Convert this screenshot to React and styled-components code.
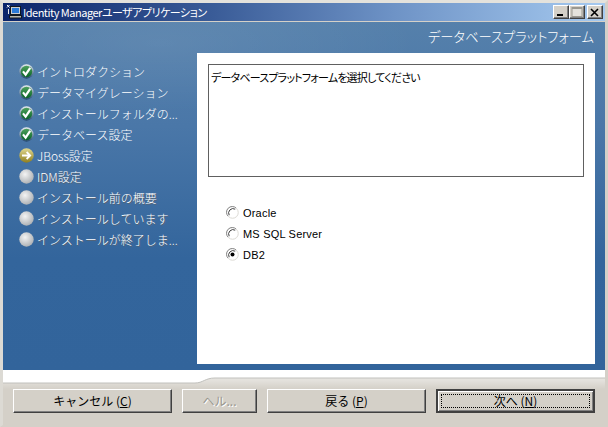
import React from 'react';
import styled, { createGlobalStyle } from 'styled-components';

const steps = [
  { label: 'イントロダクション', state: 'done' },
  { label: 'データマイグレーション', state: 'done' },
  { label: 'インストールフォルダの...', state: 'done' },
  { label: 'データベース設定', state: 'done' },
  { label: 'JBoss設定', state: 'current' },
  { label: 'IDM設定', state: 'todo' },
  { label: 'インストール前の概要', state: 'todo' },
  { label: 'インストールしています', state: 'todo' },
  { label: 'インストールが終了しま...', state: 'todo' },
];

const platforms = [
  { name: 'Oracle', checked: false },
  { name: 'MS SQL Server', checked: false },
  { name: 'DB2', checked: true },
];

const GlobalStyle = createGlobalStyle`
  html, body {
    margin: 0;
    padding: 0;
    background: #d4d0c8;
  }
  body {
    font-family: "Noto Sans CJK JP", "Liberation Sans", sans-serif;
    font-size: 12px;
  }
`;

const Frame = styled.div`
  box-sizing: border-box;
  width: 608px;
  height: 427px;
  display: flex;
  flex-direction: column;
  overflow: hidden;
  background: #d4d0c8;
  border-top: 3px solid #e4e2dc;
  border-left: 3px solid #dcdad4;
  border-right: 3px solid #d4d0c8;
  border-bottom: 2px solid #d4d0c8;
  position: relative;

  &::after {
    content: '';
    position: absolute;
    left: -3px;
    right: -3px;
    bottom: -2px;
    height: 1px;
    background: #404040;
  }
`;

const TitleBar = styled.div`
  flex: none;
  height: 18px;
  display: flex;
  align-items: center;
  padding: 0 2px 0 3px;
  background: linear-gradient(90deg, #0a246a 0%, #3a5c98 35%, #6e93c6 65%, #a6caf0 100%);
  border-bottom: 1px solid #d4d0c8;
  color: #fff;
`;

const TitleText = styled.span`
  flex: 1;
  margin-left: 1px;
  font-size: 11px;
  letter-spacing: -0.5px;
  font-feature-settings: "palt";
  line-height: 18px;
  white-space: nowrap;
`;

const WinButton = styled.div`
  box-sizing: border-box;
  width: 16px;
  height: 14px;
  margin-left: ${(p) => (p.$gap ? '2px' : '0')};
  background: #d4d0c8;
  border: 1px solid;
  border-color: #fff #404040 #404040 #fff;
  box-shadow: inset -1px -1px 0 #808080;
  display: flex;
  align-items: center;
  justify-content: center;

  svg {
    display: block;
  }
`;

const Main = styled.div`
  flex: none;
  height: 348px;
  display: flex;
  flex-direction: column;
  background:
    radial-gradient(ellipse 260px 70px at 26% 6%, rgba(255, 255, 255, 0.07), transparent 100%),
    linear-gradient(180deg, #5580ab 0%, #4a77a8 30%, #33659c 68%, #32649b 100%);
`;

const Heading = styled.div`
  flex: none;
  height: 31px;
  padding-right: 11px;
  text-align: right;
  color: #fff;
  font-size: 13.3px;
  font-weight: 300;
  font-feature-settings: "palt";
  line-height: 30px;
  white-space: nowrap;
`;

const Body = styled.div`
  flex: 1;
  min-height: 0;
  display: flex;
  padding-bottom: 6px;
`;

const StepList = styled.ul`
  flex: none;
  box-sizing: border-box;
  width: 194px;
  margin: 0;
  padding: 8px 0 0 16px;
  list-style: none;
`;

const StepRow = styled.li`
  height: 21px;
  display: flex;
  align-items: center;
  gap: 3px;
  color: #fff;
  text-shadow: ${(p) => (p.$state === 'todo' ? '1px 1px 0 #5a6470' : 'none')};
  font-size: 12px;
  font-weight: 300;
  white-space: nowrap;
`;

const Panel = styled.div`
  flex: none;
  box-sizing: border-box;
  width: 398px;
  background: #fff;
  padding: 11px 11px 0;
`;

const MessageBox = styled.div`
  box-sizing: border-box;
  height: 113px;
  border: 1px solid #606060;
  padding: 4px 2px;
  color: #000;
  font-size: 11px;
  letter-spacing: -0.8px;
  font-feature-settings: "palt";
  line-height: 16px;
`;

const RadioGroup = styled.div`
  display: flex;
  flex-direction: column;
  gap: 8px;
  margin: 29px 0 0 18px;
`;

const RadioRow = styled.label`
  height: 13px;
  display: flex;
  align-items: center;
  gap: 4px;
  color: #000;
  font-family: "Liberation Sans", sans-serif;
  font-size: 11px;
  letter-spacing: 0.2px;
`;

const Footer = styled.div`
  flex: 1;
  display: flex;
  flex-direction: column;
  background: #d4d0c8;
`;

const FooterCurve = styled.svg`
  flex: none;
  display: block;
  width: 602px;
  height: 19px;
`;

const ButtonRow = styled.div`
  display: flex;
  gap: 10px;
  padding: 0 10px;
`;

const Button = styled.button`
  box-sizing: border-box;
  width: ${(p) => (p.$narrow ? '75px' : '159px')};
  height: 24px;
  margin: 0;
  padding: 0;
  background: #d4d0c8;
  border: 1px solid;
  border-color: #fff #404040 #404040 #fff;
  box-shadow: inset -1px -1px 0 #808080;
  color: ${(p) => (p.disabled ? '#9a9890' : '#000')};
  text-shadow: ${(p) => (p.disabled ? '1px 1px 0 #fff' : 'none')};
  font-family: "Noto Sans CJK JP", "Liberation Sans", sans-serif;
  font-size: 12px;
  line-height: 20px;
`;

const DefaultButton = styled(Button)`
  position: relative;
  border: 2px solid #404040;
  box-shadow: inset 1px 1px 0 #fff, inset -1px -1px 0 #808080;

  &::after {
    content: '';
    position: absolute;
    inset: 3px;
    border: 1px dotted #000;
  }
`;

const Mnemonic = styled.span`
  text-decoration: underline;
`;

function StepIcon({ state }) {
  if (state === 'done') {
    return (
      <svg width="15" height="15" viewBox="0 0 15 15">
        <defs>
          <linearGradient id="doneRing" x1="0" y1="0" x2="0" y2="1">
            <stop offset="0" stopColor="#e8eef0" />
            <stop offset="1" stopColor="#22466e" />
          </linearGradient>
          <linearGradient id="doneFill" x1="0" y1="0" x2="0" y2="1">
            <stop offset="0" stopColor="#4ea05c" />
            <stop offset="1" stopColor="#0a6428" />
          </linearGradient>
        </defs>
        <circle cx="7.5" cy="7.5" r="7.2" fill="url(#doneRing)" />
        <circle cx="7.5" cy="7.5" r="5.7" fill="url(#doneFill)" />
        <path d="M4 7.4 L6.6 10.6 L11.2 3.8" fill="none" stroke="#fff" strokeWidth="2.2" />
      </svg>
    );
  }
  if (state === 'current') {
    return (
      <svg width="15" height="15" viewBox="0 0 15 15">
        <defs>
          <linearGradient id="currentFill" x1="0" y1="0" x2="0" y2="1">
            <stop offset="0" stopColor="#e0d890" />
            <stop offset="1" stopColor="#8f7e1e" />
          </linearGradient>
        </defs>
        <circle cx="7.5" cy="7.5" r="7.2" fill="url(#currentFill)" />
        <path d="M3 7.5 H10.6 M7.6 4 L11.2 7.5 L7.6 11" fill="none" stroke="#fff" strokeWidth="1.8" />
      </svg>
    );
  }
  return (
    <svg width="15" height="15" viewBox="0 0 15 15">
      <defs>
        <radialGradient id="todoFill" cx="0.4" cy="0.35" r="0.75">
          <stop offset="0" stopColor="#f4f4f4" />
          <stop offset="1" stopColor="#a4a8ac" />
        </radialGradient>
      </defs>
      <circle cx="7.5" cy="7.5" r="7.2" fill="url(#todoFill)" />
    </svg>
  );
}

function RadioIcon({ checked }) {
  return (
    <svg width="13" height="13" viewBox="0 0 13 13">
      <path d="M2.2 10.3 A5.5 5.5 0 0 1 10.3 2.2" fill="none" stroke="#808080" />
      <path d="M10.6 2.6 A5.5 5.5 0 0 1 2.6 10.6" fill="none" stroke="#dcdad4" />
      <circle cx="6.5" cy="6.5" r="4.4" fill="#fff" />
      <path d="M3.2 9.2 A4.4 4.4 0 0 1 9.2 3.2" fill="none" stroke="#404040" />
      {checked && <circle cx="6.5" cy="6.5" r="2" fill="#000" />}
    </svg>
  );
}

export default function App() {
  return (
    <>
      <GlobalStyle />
      <Frame>
        <TitleBar>
          <svg width="16" height="16" viewBox="0 0 16 16">
            <rect x="4.5" y="2.5" width="10" height="8" fill="#c8ccd0" stroke="#101820" />
            <rect x="6" y="4" width="7" height="5" fill="#2a7ad8" />
            <rect x="3.5" y="11.5" width="12" height="2.5" fill="#b8b8b0" stroke="#101820" />
            <path d="M1 1 L3.5 3.5 M3.5 1 L1 3.5" stroke="#fff" fill="none" />
            <path d="M2.5 5 V10" stroke="#e8e8e8" fill="none" />
          </svg>
          <TitleText>Identity Managerユーザアプリケーション</TitleText>
          <WinButton>
            <svg width="10" height="9" viewBox="0 0 10 9">
              <rect x="1" y="6" width="6" height="2" fill="#000" />
            </svg>
          </WinButton>
          <WinButton>
            <svg width="12" height="10" viewBox="0 0 12 10">
              <rect x="1" y="0.5" width="10" height="9" fill="#e4e2dc" stroke="#9a9890" />
              <rect x="1" y="0" width="10" height="2" fill="#9a9890" />
            </svg>
          </WinButton>
          <WinButton $gap>
            <svg width="10" height="9" viewBox="0 0 10 9">
              <path d="M1 1 L8 8 M8 1 L1 8" stroke="#000" strokeWidth="1.6" fill="none" />
            </svg>
          </WinButton>
        </TitleBar>
        <Main>
          <Heading>データベースプラットフォーム</Heading>
          <Body>
            <StepList>
              {steps.map((step) => (
                <StepRow key={step.label} $state={step.state}>
                  <StepIcon state={step.state} />
                  {step.label}
                </StepRow>
              ))}
            </StepList>
            <Panel>
              <MessageBox>データベースプラットフォームを選択してください</MessageBox>
              <RadioGroup>
                {platforms.map((p) => (
                  <RadioRow key={p.name}>
                    <RadioIcon checked={p.checked} />
                    {p.name}
                  </RadioRow>
                ))}
              </RadioGroup>
            </Panel>
          </Body>
        </Main>
        <Footer>
          <FooterCurve viewBox="0 0 602 19">
            <defs>
              <linearGradient id="footerFade" x1="0" y1="0" x2="0" y2="1">
                <stop offset="0" stopColor="#e8e6e2" />
                <stop offset="1" stopColor="#d4d0c8" />
              </linearGradient>
            </defs>
            <rect width="602" height="19" fill="#fff" />
            <path d="M0 13 H192 C200 13 202 8 212 8 H602 V19 H0 Z" fill="url(#footerFade)" />
            <path d="M0 13 H192 C200 13 202 8 212 8 H602" fill="none" stroke="#c0c0bc" />
          </FooterCurve>
          <ButtonRow>
            <Button>キャンセル (<Mnemonic>C</Mnemonic>)</Button>
            <Button $narrow disabled>ヘル...</Button>
            <Button>戻る (<Mnemonic>P</Mnemonic>)</Button>
            <DefaultButton>次へ (<Mnemonic>N</Mnemonic>)</DefaultButton>
          </ButtonRow>
        </Footer>
      </Frame>
    </>
  );
}
